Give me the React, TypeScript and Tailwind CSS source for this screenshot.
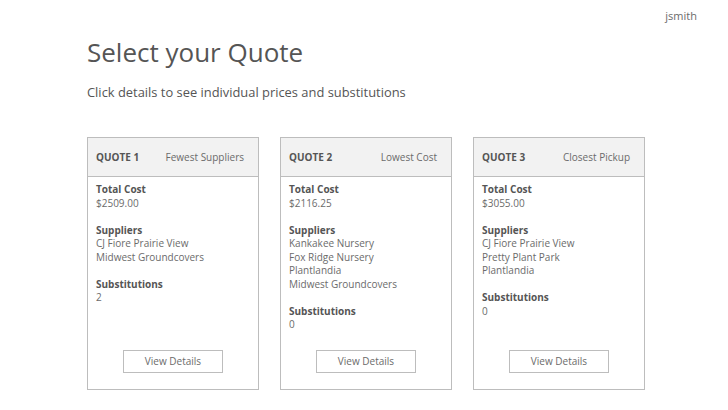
import React from "react";

type Quote = {
  id: number;
  tag: string;
  total: string;
  suppliers: string[];
  substitutions: number;
};

const quotes: Quote[] = [
  { id: 1, tag: "Fewest Suppliers", total: "$2509.00", suppliers: ["CJ Fiore Prairie View", "Midwest Groundcovers"], substitutions: 2 },
  {
    id: 2,
    tag: "Lowest Cost",
    total: "$2116.25",
    suppliers: ["Kankakee Nursery", "Fox Ridge Nursery", "Plantlandia", "Midwest Groundcovers"],
    substitutions: 0,
  },
  { id: 3, tag: "Closest Pickup", total: "$3055.00", suppliers: ["CJ Fiore Prairie View", "Pretty Plant Park", "Plantlandia"], substitutions: 0 },
];

function QuoteCard({ quote }: { quote: Quote }) {
  return (
    <div className="flex h-[253px] w-[172px] flex-col border border-[#bdbdbd] bg-white">
      <div className="flex h-[39px] items-center justify-between border-b border-[#bdbdbd] bg-[#f2f2f2] pl-2 pr-[14px] text-[10px]">
        <span className="font-bold text-[#555]">QUOTE {quote.id}</span>
        <span className="text-[#6b6b6b]">{quote.tag}</span>
      </div>
      <div className="flex flex-1 flex-col px-2 pt-[6px] pb-4 text-[10px] leading-[13.5px] text-[#6b6b6b]">
        <div className="font-bold text-[#555]">Total Cost</div>
        <div>{quote.total}</div>
        <div className="mt-[13.5px] font-bold text-[#555]">Suppliers</div>
        {quote.suppliers.map((s) => (
          <div key={s}>{s}</div>
        ))}
        <div className="mt-[13.5px] font-bold text-[#555]">Substitutions</div>
        <div>{quote.substitutions}</div>
        <button className="mx-auto mt-auto h-[23px] w-[100px] border border-[#bdbdbd] bg-white text-[10px] text-[#6b6b6b]">
          View Details
        </button>
      </div>
    </div>
  );
}

export default function App() {
  return (
    <div className="relative h-[410px] w-[728px] overflow-hidden bg-white font-['Open_Sans',sans-serif]">
      <div className="absolute right-[31px] top-[8px] text-[11px] text-[#6b6b6b]">jsmith</div>
      <main className="pl-[87px] pt-[34px]">
        <h1 className="text-[26px] leading-[36px] text-[#555]">Select your Quote</h1>
        <p className="mt-[13px] text-[12.9px] leading-[18px] text-[#555]">
          Click details to see individual prices and substitutions
        </p>
        <div className="mt-[36px] flex gap-[21px]">
          {quotes.map((q) => (
            <QuoteCard key={q.id} quote={q} />
          ))}
        </div>
      </main>
    </div>
  );
}
